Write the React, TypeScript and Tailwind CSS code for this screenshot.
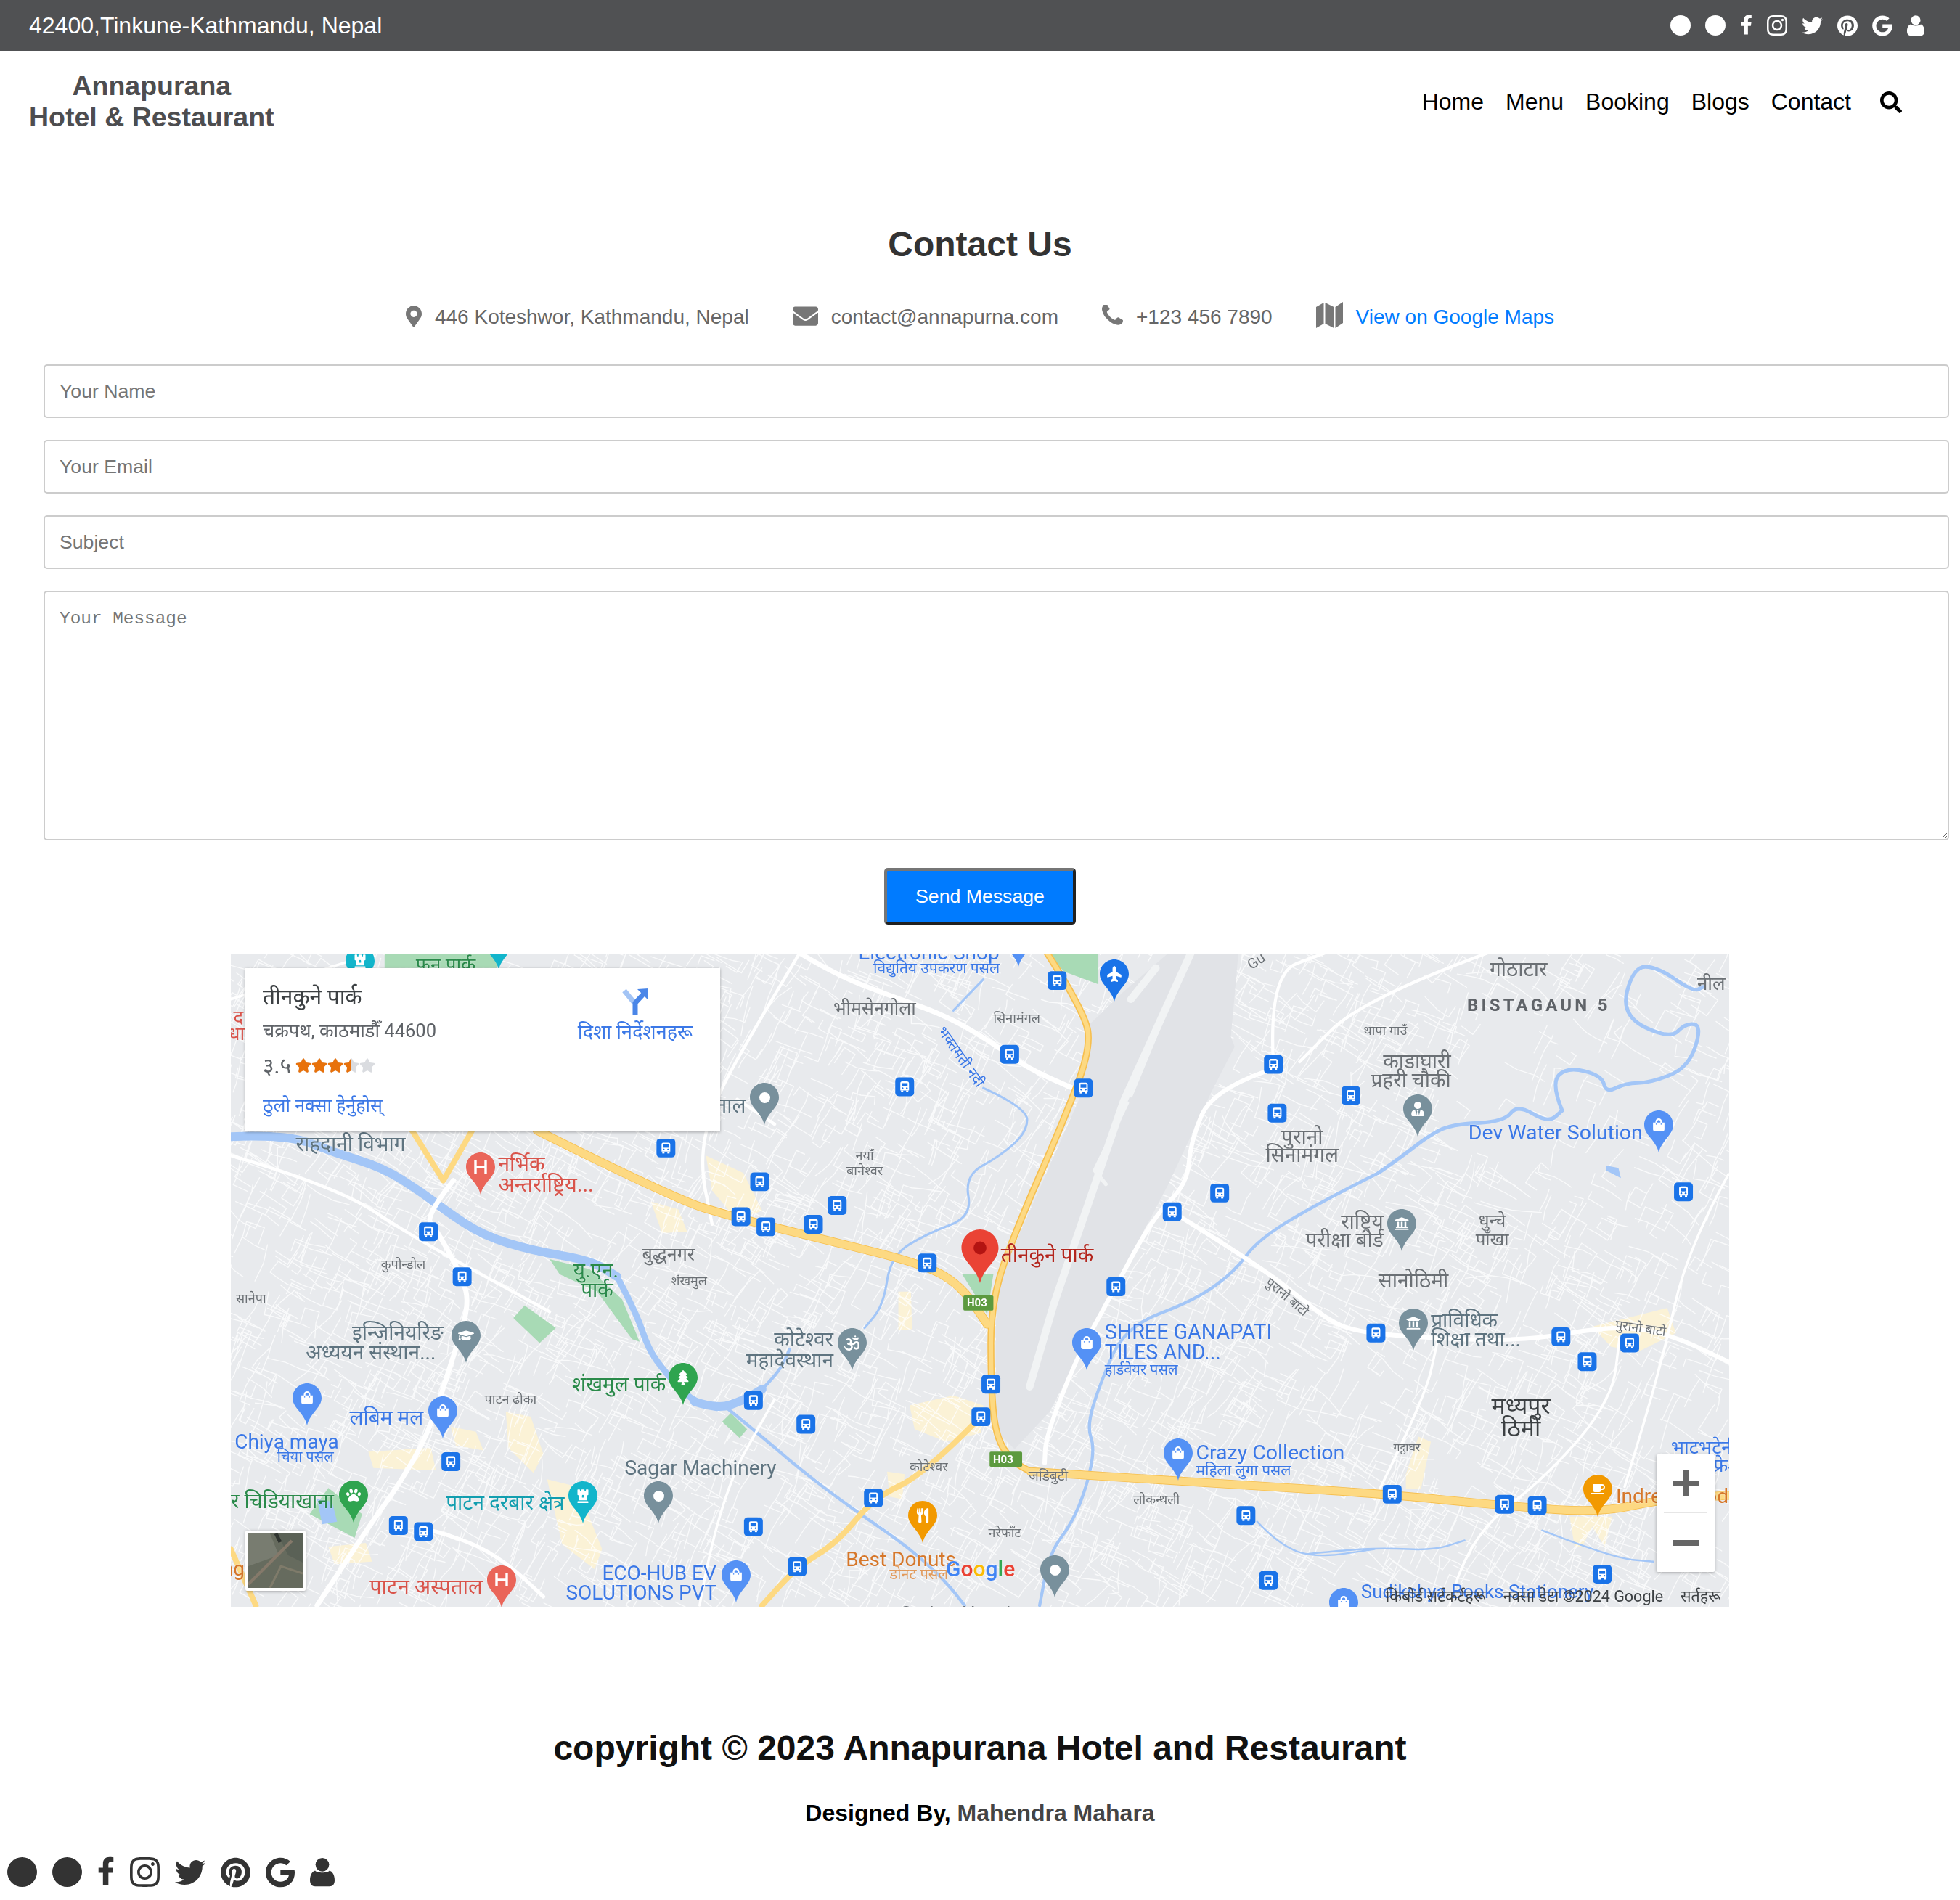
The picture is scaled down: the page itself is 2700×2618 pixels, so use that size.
import { FaFacebookF, FaInstagram, FaTwitter, FaPinterest, FaGoogle, FaSearch, FaMapMarkerAlt, FaEnvelope, FaStar, FaGraduationCap, FaTree, FaPaw, FaChessRook, FaOm, FaUtensils, FaCoffee, FaPlane, FaUniversity, FaShoppingBag, FaUserTie } from "react-icons/fa";
import type { ReactNode } from "react";

const SCALE = 2064 / 1198.6;
const mx = (x: number) => (x - 185) * SCALE;
const my = (y: number) => (y - 763.5) * SCALE + 2;

function UserIcon({ className }: { className: string }) {
  return (
    <svg viewBox="0 0 24 28" className={className} fill="currentColor">
      <circle cx="12" cy="6.8" r="6.6" />
      <path d="M5 12.6C7 15.2 17 15.2 19 12.6C22 13.5 24 17 24 22C24 26 22 28 19 28H5C2 28 0 26 0 22C0 17 2 13.5 5 12.6Z" />
    </svg>
  );
}

function PhoneIcon() {
  return (
    <svg viewBox="192 192 1408 1408" className="w-[29px] h-[29px] -mt-[5px] text-[#777777]" fill="currentColor">
      <path d="M1600 1240q0 27-10 70.5t-21 68.5q-21 50-122 106-94 51-186 51-27 0-53-3.5t-57.5-12.5-47-14.5-55.5-20.5-49-18q-98-35-175-83-127-79-264-216t-216-264q-48-77-83-175-3-9-18-49t-20.5-55.5-14.5-47-12.5-57.5-3.5-53q0-92 51-186 56-101 106-122 25-11 68.5-21t70.5-10q14 0 21 3 18 6 53 76 11 19 30 54t35 63.5 31 53.5q3 4 17.5 25t21.5 35.5 7 28.5q0 20-28.5 50t-62 55-62 53-28.5 46q0 9 5 22.5t8.5 20.5 14 24 11.5 19q76 137 174 235t235 174q2 1 19 11.5t24 14 20.5 8.5 22.5 5q18 0 46-28.5t53-62 55-62 50-28.5q14 0 28.5 7t35.5 21.5 25 17.5q25 15 53.5 31t63.5 35 54 30q70 35 76 53 3 7 3 21z" />
    </svg>
  );
}

function FoldedMapIcon() {
  return (
    <svg viewBox="0 0 37 36" className="w-[37px] h-[36px] -mt-[6px] text-[#777777]" fill="currentColor">
      <path d="M0 7L10.5 1V30L0 36Z" />
      <path d="M12.5 1L24.5 7V36L12.5 30Z" />
      <path d="M26.5 7L37 0V29L26.5 36Z" />
    </svg>
  );
}

function Socials({ big }: { big?: boolean }) {
  const dot = big ? "w-[41px] h-[41px] rounded-full bg-current" : "w-[28px] h-[28px] rounded-full bg-current";
  return (
    <div className={big ? "flex items-center gap-[21px]" : "flex items-center gap-[20px]"}>
      <div className={dot} />
      <div className={dot} />
      <FaFacebookF className={big ? "w-[24px] h-[44px] -mt-[3px]" : "w-[17px] h-[30px] -mt-[3px]"} />
      <FaInstagram className={big ? "w-[41px] h-[47px]" : "w-[28px] h-[32px]"} />
      <FaTwitter className={big ? "w-[42px] h-[42px]" : "w-[29px] h-[29px]"} />
      <FaPinterest className={big ? "w-[41px] h-[42px]" : "w-[28px] h-[29px]"} />
      <FaGoogle className={big ? "w-[40px] h-[42px]" : "w-[28px] h-[29px]"} />
      <UserIcon className={big ? "w-[34px] h-[41px]" : "w-[24px] h-[28px]"} />
    </div>
  );
}

function InfoItem({ icon, children }: { icon: ReactNode; children: ReactNode }) {
  return (
    <div className="flex items-center gap-[18px]">
      {icon}
      <span>{children}</span>
    </div>
  );
}

// street texture, seeded so it stays the same on every load
function buildStreets() {
  let seed = 20240611;
  const rnd = () => {
    seed = (seed * 1664525 + 1013904223) % 4294967296;
    return seed / 4294967296;
  };
  let d = "";
  for (let i = 0; i < 4200; i++) {
    const x = 185 + rnd() * 1198;
    const y = 763 + rnd() * 522;
    if (x > 1170 && x < 1345 && y > 800 && y < 950 && rnd() < 0.75) continue;
    let a = Math.floor(rnd() * 4) * 1.57 + 0.3 + rnd() * 0.35;
    let cx = x;
    let cy = y;
    d += `M${cx.toFixed(1)} ${cy.toFixed(1)}`;
    const n = 2 + Math.floor(rnd() * 3);
    for (let j = 0; j < n; j++) {
      const len = 5 + rnd() * 11;
      cx += Math.cos(a) * len;
      cy += Math.sin(a) * len;
      d += `L${cx.toFixed(1)} ${cy.toFixed(1)}`;
      a += rnd() < 0.35 ? 1.57 : (rnd() - 0.5) * 0.5;
    }
  }
  return d;
}
const streets = buildStreets();

// rounds the corners of "M x y L x y ..." poly lines
function curve(d: string) {
  return d
    .split("M")
    .filter((s) => s.trim())
    .map((sub) => {
      const p = sub.trim().split("L").map((xy) => xy.trim().split(" ").map(Number));
      let out = `M${p[0][0]} ${p[0][1]}`;
      for (let i = 1; i < p.length - 1; i++) {
        const mxp = (p[i][0] + p[i + 1][0]) / 2;
        const myp = (p[i][1] + p[i + 1][1]) / 2;
        out += `Q${p[i][0]} ${p[i][1]} ${mxp} ${myp}`;
      }
      const last = p[p.length - 1];
      return `${out}L${last[0]} ${last[1]}`;
    })
    .join("");
}

const ringNorth = curve("M838 763L868 810L873 840L850 900L815 980L793 1040L793 1110L797 1150L810 1170L825 1178");
const ringWest = curve("M430 905L540 960L590 975L650 990L740 1012L770 1030L790 1060");
const ringEast = curve("M825 1178L900 1183L1100 1195L1200 1205L1280 1211L1330 1200L1383 1197");

const busStops = [
  [846, 785], [808, 844], [724, 870], [867, 871], [1019, 852], [1022, 891], [1081, 877], [533, 919], [608, 946], [593, 974],
  [613, 982], [651, 980], [670, 965], [742, 1011], [893, 1030], [938, 970], [976, 955], [1347, 954], [343, 986], [370, 1022],
  [1101, 1067], [1249, 1070], [1270, 1090], [1304, 1075], [793, 1108], [785, 1134], [603, 1121], [645, 1140], [361, 1170], [699, 1199],
  [319, 1221], [339, 1226], [603, 1222], [638, 1254], [997, 1213], [1015, 1265], [1114, 1196], [1204, 1204], [1230, 1205], [1282, 1260],
];

function MapDrawing() {
  return (
    <svg viewBox="185 763.5 1198.6 522.6" className="absolute inset-0 w-full h-full" fill="none" strokeLinecap="round" strokeLinejoin="round">
      <rect x="185" y="763" width="1200" height="524" fill="#e8eaed" />
      {/* built up areas */}
      <g fill="#fbf2d6">
        <path d="M405 1130l20 4 10 30-8 15-20-20z" />
        <path d="M438 1184l24 6 20 50-6 16-26-20z" />
        <path d="M295 1162l50-3 4 18-50-2z" />
        <path d="M263 1238l30-3 5 15-30 2z" />
        <path d="M361 1142l20 4 6 15-22-4z" />
        <path d="M728 1125l35-8 24 8-2 22-28 7-25-10z" />
        <path d="M719 1034l10 0 1 30-11 1z" />
        <path d="M710 1178l14 2-2 20-10-2z" />
        <path d="M565 925l30 14 15 30-20 8-20-24z" />
        <path d="M521 962l22 6 7 18-20 1z" />
        <path d="M1274 1062l60-15 7 20-30 15-22-4z" />
        <path d="M1256 1214l34 0-6 24-10-16-8 16-6 0z" />
        <path d="M1125 1180l10-30 10 4-8 38-12 0z" />
      </g>
      <path d={streets} stroke="#ffffff" strokeWidth="0.8" opacity="0.75" />
      {/* parks */}
      <g fill="#a8dab5">
        <path d="M308 763h90v12h-90z" />
        <path d="M836 763h43v25l-27-10z" />
        <path d="M411 1055l9-10 25 18-13 12z" />
        <path d="M248 1212l15-21 27 21-6 19z" />
        <path d="M578 1138l7-7 13 13-6 7z" />
        <path d="M770 1020h25l-5 32z" />
        <path d="M440 1008l32 8 26 24 14 34-6-2-28-38-30-14z" />
      </g>
      {/* rivers */}
      <g stroke="#a3c6f7">
        <path strokeWidth="7" d={curve("M185 910L230 908L269 923L307 935L337 954L358 970L387 989L426 1001L473 1009L494 1022")} />
        <path strokeWidth="5" d={curve("M494 1022L509 1050L519 1080L532 1098L553 1121L574 1127")} />
        <path strokeWidth="7" d={curve("M556 1122L574 1128L595 1121L610 1112")} />
        <path strokeWidth="2.5" d={curve("M610 1112L624 1098L632 1080")} />
        <path strokeWidth="2.5" d={curve("M583 1128L610 1150L639 1175L677 1204L728 1239L757 1266L772 1285")} />
        <path strokeWidth="3" d={curve("M1103 939L1123 925L1142 910L1161 900L1204 898L1214 884L1239 899L1250 889")} />
        <path strokeWidth="3" d={curve("M1250 889L1241 867L1254 854L1282 861L1285 875L1301 867L1320 867L1351 855L1362 821L1349 819L1336 832L1297 813L1307 774L1326 774L1355 794L1363 790")} />
        <path strokeWidth="2.5" d={curve("M1103 939L1053 964L1006 993L988 1018L956 1041L900 1062L879 1111L870 1142L876 1159L870 1189L858 1219L840 1243L832 1285")} />
        <path strokeWidth="1.8" d={curve("M787 784L763 809M787 871L822 887L822 906L801 925L772 941L778 974L743 987L713 1005L707 1045L692 1063")} />
        <path strokeWidth="1.4" d={curve("M1045 1244L1074 1241L1107 1239L1147 1241L1172 1233M1234 1225L1290 1247L1323 1250M1006 1218L1024 1237L1053 1247L1100 1240")} />
      </g>
      <path d="M1285 933l10 2 2 8-12-6z" fill="#a3c6f7" />
      <path d="M254 1200l12 2 4 16-12 2z" fill="#a3c6f7" />
      {/* airport */}
      <path d="M935 763L991 763L985 830L988 838L970 873L935 948L884 1045L840 1130L812 1160L797 1145L797 1060L799 1026L864 879L870 822L899 794Z" fill="#e1e3e7" />
      <g stroke="#f1f3f4">
        <path strokeWidth="6" d="M953 763L899 882L843 1045L824 1110" />
        <path strokeWidth="3" d="M929 819L905 877M902 883L876 937L885 948" />
        <path strokeWidth="6" d="M925 775L905 800" />
      </g>
      {/* white roads */}
      <g stroke="#ffffff">
        <path strokeWidth="4" d={curve("M640 763L668 780L712 797L757 813L793 834L822 855L858 871")} />
        <path strokeWidth="3.5" d={curve("M1012 858L970 873L953 913L950 948L923 974L888 1039L861 1088L837 1150L836 1171")} />
        <path strokeWidth="3.5" d={curve("M938 970L1006 1012L1048 1045L1074 1064L1123 1070L1218 1074L1290 1061L1334 1067L1383 1090")} />
        <path strokeWidth="4" d={curve("M363 945L340 974L350 985L370 1022L376 1045L361 1092L343 1148L319 1189L298 1218L254 1285")} />
        <path strokeWidth="3" d={curve("M337 1223L370 1231L405 1250L435 1278")} />
        <path strokeWidth="2.5" d={curve("M185 925L270 950L330 990L440 1050M590 880L620 900M640 763L600 830L570 885L560 930L570 980M1019 852L1015 780L1060 763M1190 763L1090 800L1040 850")} />
        <path strokeWidth="2" d={curve("M1160 1285L1172 1233L1240 1180L1290 1120L1296 1070M1100 1200L1140 1120L1150 1075M560 1285L575 1200L620 1120M185 800L300 763M1383 940L1350 1000L1330 1090L1300 1190")} />
      </g>
      {/* highways */}
      <g stroke="#f6bf4f">
        <path strokeWidth="5.5" d={ringNorth} />
        <path strokeWidth="7" d={ringWest} />
        <path strokeWidth="7" d={ringEast} />
      </g>
      <g stroke="#fdd982">
        <path strokeWidth="3.6" d={ringNorth} />
        <path strokeWidth="6" d={ringWest} />
        <path strokeWidth="6" d={ringEast} />
        <path strokeWidth="4.5" d={curve("M785 1134L740 1180L699 1199L670 1235L638 1254L610 1285")} />
        <path strokeWidth="4.5" d="M330 905L355 945L378 905M185 1240L205 1285" />
      </g>
      {/* bus stops */}
      {busStops.map(([x, y]) => (
        <g key={`${x}-${y}`} transform={`translate(${x - 7.5} ${y - 7.5}) scale(0.58)`}>
          <rect width="26" height="26" rx="5" fill="#1a73e8" />
          <path d="M7 8a2.5 2.5 0 012.5-2.5h7A2.5 2.5 0 0119 8v10H7z" fill="#ffffff" />
          <rect x="9" y="8" width="8" height="4.5" fill="#1a73e8" />
          <circle cx="10" cy="15" r="1.2" fill="#1a73e8" />
          <circle cx="16" cy="15" r="1.2" fill="#1a73e8" />
          <rect x="8" y="18" width="3" height="2.5" fill="#ffffff" />
          <rect x="15" y="18" width="3" height="2.5" fill="#ffffff" />
        </g>
      ))}
      <rect x="771" y="1037" width="24" height="12" rx="1" fill="#5c9a3f" />
      <rect x="792" y="1162" width="26" height="12" rx="1" fill="#5c9a3f" />
    </svg>
  );
}

type Tone = "grey" | "slate" | "dark" | "red" | "wine" | "green" | "teal" | "blue" | "orange" | "tan";
const toneClass: Record<Tone, string> = {
  grey: "text-[#6b7075]",
  slate: "text-[#5f7480]",
  dark: "text-[#3c4043]",
  red: "text-[#d9534a]",
  wine: "text-[#b3261e]",
  green: "text-[#2a8a4a]",
  teal: "text-[#129eaf]",
  blue: "text-[#3b78e7]",
  orange: "text-[#d6772a]",
  tan: "text-[#e19a5c]",
};

// text, x, y (centre), px size, tone, anchor (l/c/r), rotation
type Label = [string, number, number, number, Tone, ("l" | "c" | "r")?, number?];
const labels: Label[] = [
  ["फन पार्क", 333, 771, 26, "green"],
  ["Electronic Shop", 687, 762, 28, "blue"],
  ["विद्युतिय उपकरण पसल", 699, 774, 21, "blue"],
  ["Gu", 998, 768, 20, "grey", "l", -35],
  ["द", 187, 813, 26, "red"],
  ["धा", 183, 826, 26, "red"],
  ["अस्पताल", 597, 884, 28, "slate", "r"],
  ["राहदानी विभाग", 237, 915, 28, "slate"],
  ["नर्भिक", 399, 931, 28, "red"],
  ["अन्तर्राष्ट्रिय...", 399, 947, 29, "red"],
  ["भीमसेनगोला", 667, 806, 25, "grey"],
  ["सिनामंगल", 795, 814, 18, "grey"],
  ["भक्तमती नदी", 769, 845, 20, "blue", "c", 55],
  ["नयाँ", 692, 924, 18, "grey", "c"],
  ["बानेश्वर", 692, 936, 18, "grey", "c"],
  ["बुद्धनगर", 514, 1003, 25, "grey"],
  ["शंखमुल", 537, 1024, 18, "grey"],
  ["कुपोन्डोल", 305, 1011, 18, "grey"],
  ["सानेपा", 189, 1038, 18, "grey"],
  ["यु.एन.", 477, 1016, 28, "green", "c"],
  ["पार्क", 478, 1032, 28, "green", "c"],
  ["इन्जिनियरिङ", 282, 1066, 28, "slate"],
  ["अध्ययन संस्थान...", 245, 1082, 28, "slate"],
  ["कोटेश्वर", 667, 1071, 28, "slate", "r"],
  ["महादेवस्थान", 667, 1088, 28, "slate", "r"],
  ["शंखमुल पार्क", 458, 1107, 28, "green"],
  ["पाटन ढोका", 388, 1119, 18, "grey"],
  ["लबिम मल", 280, 1134, 28, "blue"],
  ["Chiya maya", 188, 1153, 28, "blue"],
  ["चिया पसल", 222, 1165, 20, "blue"],
  ["र चिडियाखाना", 185, 1201, 28, "green"],
  ["पाटन दरबार क्षेत्र", 357, 1202, 28, "teal"],
  ["Sagar Machinery", 500, 1174, 28, "slate"],
  ["ECO-HUB EV", 482, 1258, 28, "blue"],
  ["SOLUTIONS PVT", 453, 1274, 28, "blue"],
  ["पाटन अस्पताल", 296, 1269, 29, "red"],
  ["ng", 196, 1255, 28, "orange", "r"],
  ["Best Donuts", 677, 1247, 28, "orange"],
  ["डोनट पसल", 712, 1259, 20, "tan"],
  ["Godart Nepal", 720, 1290, 26, "grey"],
  ["नरेफाँट", 791, 1226, 18, "grey"],
  ["कोटेश्वर", 728, 1173, 18, "grey"],
  ["जडिबुटी", 823, 1180, 19, "grey"],
  ["लोकन्थली", 907, 1199, 18, "grey"],
  ["गट्ठाघर", 1115, 1158, 16, "grey"],
  ["SHREE GANAPATI", 884, 1065, 28.7, "blue"],
  ["TILES AND...", 884, 1081, 28.7, "blue"],
  ["हार्डवेयर पसल", 884, 1095, 20, "blue"],
  ["Crazy Collection", 957, 1162, 28.5, "blue"],
  ["महिला लुगा पसल", 957, 1176, 21, "blue"],
  ["Dev Water Solution", 1175, 906, 28.5, "blue"],
  ["गोठाटार", 1192, 775, 28, "grey"],
  ["थापा गाउँ", 1091, 824, 18, "grey"],
  ["काडाघारी", 1161, 849, 28, "grey", "r"],
  ["प्रहरी चौकी", 1161, 864, 28, "grey", "r"],
  ["पुरानो", 1042, 909, 28, "grey", "c"],
  ["सिनामंगल", 1042, 924, 28, "grey", "c"],
  ["राष्ट्रिय", 1107, 977, 28, "grey", "r"],
  ["परीक्षा बोर्ड", 1107, 992, 28, "grey", "r"],
  ["धुन्चे", 1194, 976, 24, "grey", "c"],
  ["पाँखा", 1194, 991, 24, "grey", "c"],
  ["सानोठिमी", 1103, 1024, 28, "grey"],
  ["प्राविधिक", 1145, 1056, 28, "slate"],
  ["शिक्षा तथा...", 1145, 1071, 28, "slate"],
  ["पुरानो बाटो", 1313, 1062, 18, "grey", "c", 8],
  ["पुरानो बाटो", 1030, 1037, 18, "grey", "c", 40],
  ["मध्यपुर", 1217, 1124, 32, "dark", "c"],
  ["ठिमी", 1217, 1142, 32, "dark", "c"],
  ["भाटभटेनी", 1337, 1157, 26, "blue"],
  ["फ्रेश", 1371, 1172, 26, "blue"],
  ["Indreni Food", 1293, 1197, 28, "orange"],
  ["नील", 1358, 786, 26, "grey"],
  ["Sudikshya Books Stationery", 1089, 1273, 26, "blue"],
  ["तीनकुने पार्क", 801, 1004, 28, "wine"],
];

function MapLabel({ item }: { item: Label }) {
  const [text, x, y, size, tone, anchor = "l", rot = 0] = item;
  const shift = anchor === "l" ? "0%" : anchor === "c" ? "-50%" : "-100%";
  return (
    <span
      className={`absolute whitespace-nowrap leading-none [text-shadow:0_0_2px_#f1f3f4] ${toneClass[tone]}`}
      style={{ left: mx(x), top: my(y), fontSize: size, transform: `translate(${shift},-50%) rotate(${rot}deg)` }}
    >
      {text}
    </span>
  );
}

type PinItem = [number, number, string, ReactNode];
const grey = "#78909c";
const blue = "#5491f5";
const bag = <FaShoppingBag size={18} />;
const dot = <span className="block w-[15px] h-[15px] rounded-full bg-white" />;
const hosp = (
  <svg width="20" height="20" viewBox="0 0 20 20" stroke="#fff" strokeWidth="3.4" fill="none">
    <path d="M3 1v18M17 1v18M3 10h14" />
  </svg>
);
// centre x, top y in page pixels of the map
const pins: PinItem[] = [
  [735, 178, grey, dot],
  [343.5, 274, "#ea6559", hosp],
  [324, 506, grey, <FaGraduationCap size={22} />],
  [105, 592, blue, bag],
  [291.5, 610, blue, bag],
  [623, 564, "#2fa44f", <FaTree size={20} />],
  [169, 726, "#2fa44f", <FaPaw size={20} />],
  [485, 727, "#12b5cb", <FaChessRook size={20} />],
  [589, 727, grey, dot],
  [695.6, 836, blue, bag],
  [373, 843, "#ea6559", hosp],
  [855.5, 516, grey, <FaOm size={21} />],
  [1179, 516, blue, bag],
  [1304.5, 668, blue, bag],
  [953, 754, "#f29900", <FaUtensils size={20} />],
  [1135, 829, grey, dot],
  [1533, 874, blue, bag],
  [1629, 489, grey, <FaUniversity size={20} />],
  [1883, 718, "#f29900", <FaCoffee size={20} />],
  [1635, 194, grey, <FaUserTie size={20} />],
  [1967, 216, blue, bag],
  [1613, 352, grey, <FaUniversity size={20} />],
  [178, -10, "#12b5cb", <FaChessRook size={20} />],
  [369, -36, "#12b5cb", dot],
  [1085, -40, blue, bag],
  [1217, 8, "#1a73e8", <FaPlane size={22} className="-rotate-90" />],
];

function Pin({ item }: { item: PinItem }) {
  const [x, y, color, glyph] = item;
  return (
    <div className="absolute w-[40px] h-[58px]" style={{ left: x - 20, top: y }}>
      <svg viewBox="0 0 40 58" className="w-full h-full">
        <path fill={color} d="M20 0C9 0 0 9 0 20c0 6 3 11 7 16 5 6 11 13 13 22 2-9 8-16 13-22 4-5 7-10 7-16C40 9 31 0 20 0z" />
      </svg>
      <div className="absolute left-0 top-0 w-[40px] h-[40px] flex items-center justify-center text-white">{glyph}</div>
    </div>
  );
}

function InfoCard() {
  return (
    <div className="absolute left-[20px] top-[20px] w-[654px] h-[225px] bg-white shadow-[0_1px_4px_rgba(0,0,0,0.3)] pl-[24px] pr-[38px] pt-[18px] flex justify-between">
      <div className="flex flex-col">
        <div className="text-[30px] leading-[44px] text-[#3c4043]">तीनकुने पार्क</div>
        <div className="text-[25.5px] leading-[36px] mt-[6px] text-[#5f6368]">चक्रपथ, काठमाडौँ 44600</div>
        <div className="flex items-center gap-[6px] mt-[14px] h-[32px] text-[30px] text-[#5f6368]">
          <span>३.५</span>
          <div className="relative flex text-[#dadce0]">
            <FaStar size={22} />
            <FaStar size={22} />
            <FaStar size={22} />
            <FaStar size={22} />
            <FaStar size={22} />
            <div className="absolute left-0 top-0 w-[77px] overflow-hidden flex text-[#e8710a]">
              <FaStar size={22} className="shrink-0" />
              <FaStar size={22} className="shrink-0" />
              <FaStar size={22} className="shrink-0" />
              <FaStar size={22} className="shrink-0" />
            </div>
          </div>
        </div>
        <div className="text-[25px] leading-[40px] mt-[20px] text-[#3b78e7]">ठुलो नक्सा हेर्नुहोस्</div>
      </div>
      <div className="flex flex-col items-center pt-[10px]">
        <svg width="36" height="36" viewBox="0 0 36 36" fill="none">
          <path d="M3 3L17 20" stroke="#a3c4f5" strokeWidth="7" />
          <path d="M18 36V20L30 7" stroke="#4a86e8" strokeWidth="7" />
          <path d="M21 1L36 0L35 15Z" fill="#4a86e8" />
        </svg>
        <div className="text-[27px] leading-[40px] mt-[4px] text-[#3b78e7]">दिशा निर्देशनहरू</div>
      </div>
    </div>
  );
}

function GoogleMap() {
  return (
    <div className="relative w-[2064px] h-[900px] mx-auto overflow-hidden bg-[#e8eaed] font-['Roboto','Noto_Sans','Noto_Sans_Devanagari',sans-serif]">
      <div className="absolute inset-0 blur-[0.6px]">
        <MapDrawing />
        {labels.map((l, i) => (
          <MapLabel key={i} item={l} />
        ))}
        <span className="absolute left-[1703px] top-[59px] text-[24px] leading-none font-bold tracking-[4.2px] text-[#5f6368]">BISTAGAUN 5</span>
        {pins.map((p, i) => (
          <Pin key={i} item={p} />
        ))}
        {/* main marker */}
        <div className="absolute left-[1006px] top-[380px] w-[52px] h-[74px]">
          <svg viewBox="0 0 40 58" className="w-full h-full">
            <path fill="#ea4335" d="M20 0C9 0 0 9 0 20c0 6 3 11 7 16 5 6 11 13 13 22 2-9 8-16 13-22 4-5 7-10 7-16C40 9 31 0 20 0z" />
            <circle cx="20" cy="20" r="7" fill="#b31412" />
          </svg>
        </div>
        <span className="absolute left-[1014px] top-[474px] text-[15px] leading-none font-bold text-white">H03</span>
        <span className="absolute left-[1050px] top-[690px] text-[15px] leading-none font-bold text-white">H03</span>
        <InfoCard />
        <div className="absolute left-[20px] top-[795px] w-[83px] h-[83px] border-[4px] border-white rounded-[2px] shadow-[0_1px_4px_rgba(0,0,0,0.3)] bg-[#666b5e] overflow-hidden">
          <svg viewBox="0 0 75 75" className="w-full h-full">
            <path d="M0 0H30L42 30L0 45Z" fill="#787c70" />
            <path d="M40 0H75V40L55 30Z" fill="#5a6156" />
            <path d="M0 70L30 40L60 10" stroke="#85796a" strokeWidth="4" fill="none" />
            <path d="M30 75L45 45L75 55" stroke="#7f7b6a" strokeWidth="3" fill="none" />
            <path d="M38 0L44 12" stroke="#2f3430" strokeWidth="5" />
          </svg>
        </div>
        <div className="absolute left-[985px] top-[833px] text-[30px] leading-none font-medium [text-shadow:0_0_2px_#fff]">
          <span className="text-[#4285f4]">G</span>
          <span className="text-[#ea4335]">o</span>
          <span className="text-[#fbbc05]">o</span>
          <span className="text-[#4285f4]">g</span>
          <span className="text-[#34a853]">l</span>
          <span className="text-[#ea4335]">e</span>
        </div>
        <div className="absolute left-[1964px] top-[690px] w-[80px] h-[162px] bg-white rounded-[2px] shadow-[0_1px_4px_rgba(0,0,0,0.3)] flex flex-col items-center">
          <div className="h-[80px] flex items-center justify-center">
            <svg width="36" height="36" viewBox="0 0 36 36" fill="#666666">
              <path d="M14 0h8v14h14v8H22v14h-8V22H0v-8h14z" />
            </svg>
          </div>
          <div className="w-[60px] h-[1px] bg-[#e6e6e6]" />
          <div className="flex-1 flex items-center justify-center">
            <div className="w-[36px] h-[8px] bg-[#666666]" />
          </div>
        </div>
        <div className="absolute right-0 bottom-0 h-[28px] pr-[12px] flex items-center gap-[24px] text-[21.5px] leading-none text-[#3c4043]">
          <span>किबोर्ड सर्टकर्टहरू</span>
          <span>नक्सा डेटा ©2024 Google</span>
          <span>सर्तहरू</span>
        </div>
      </div>
    </div>
  );
}

function FormField({ placeholder }: { placeholder: string }) {
  return (
    <input
      placeholder={placeholder}
      className="block w-full h-[74px] px-[20px] bg-white border-2 border-[#cccccc] rounded-[5px] text-[26.67px] placeholder:text-[#757575] outline-none"
    />
  );
}

export default function App() {
  return (
    <div className="w-full bg-white font-['Liberation_Sans',Arial,sans-serif]">
      <div className="h-[70px] bg-[#505153] text-white flex items-center justify-between pl-[40px] pr-[49px]">
        <span className="text-[32px] leading-none">42400,Tinkune-Kathmandu, Nepal</span>
        <Socials />
      </div>

      <header className="h-[140px] flex items-center justify-between pl-[40px] pr-[80px]">
        <div className="text-[37.5px] leading-[43px] font-bold text-[#4d4d4f] text-center">
          Annapurana
          <br />
          Hotel &amp; Restaurant
        </div>
        <nav className="flex items-center text-[32px] text-black">
          <div className="flex gap-[30px]">
            <a>Home</a>
            <a>Menu</a>
            <a>Booking</a>
            <a>Blogs</a>
            <a>Contact</a>
          </div>
          <FaSearch size={30} className="ml-[40px] mt-[2px]" />
        </nav>
      </header>

      <main>
        <h2 className="mt-[98px] text-center text-[48px] leading-[58px] font-bold text-[#333333]">Contact Us</h2>
        <div className="mt-[51px] h-[40px] flex items-center justify-center gap-[60px] text-[28px] text-[#666666]">
          <InfoItem icon={<FaMapMarkerAlt size={30} className="text-[#777777] w-[22px] -mt-[3px]" />}>446 Koteshwor, Kathmandu, Nepal</InfoItem>
          <InfoItem icon={<FaEnvelope size={35} className="text-[#777777] -mt-[3px]" />}>contact@annapurna.com</InfoItem>
          <InfoItem icon={<PhoneIcon />}>+123 456 7890</InfoItem>
          <InfoItem icon={<FoldedMapIcon />}>
            <a className="text-[#007bff]">View on Google Maps</a>
          </InfoItem>
        </div>

        <form className="mt-[45px] pl-[60px] pr-[15px] flex flex-col gap-[30px]">
          <FormField placeholder="Your Name" />
          <FormField placeholder="Your Email" />
          <FormField placeholder="Subject" />
          <textarea
            placeholder="Your Message"
            className="block w-full h-[344px] px-[20px] pt-[22px] pb-[18px] bg-white border-2 border-[#cccccc] rounded-[5px] font-['Liberation_Mono',monospace] text-[24.4px] leading-[30px] placeholder:text-[#757575] outline-none"
          />
        </form>

        <div className="mt-[38px] flex justify-center">
          <button className="w-[264px] h-[78px] bg-[#007bff] text-white text-[26.67px] rounded-[5px] border-[4px] border-t-[#767676] border-l-[#767676] border-r-[#212121] border-b-[#212121]">
            Send Message
          </button>
        </div>

        <div className="mt-[40px]">
          <GoogleMap />
        </div>
      </main>

      <footer className="text-center">
        <h3 className="mt-[166px] text-[48px] leading-[58px] font-bold text-[#111111]">copyright © 2023 Annapurana Hotel and Restaurant</h3>
        <p className="mt-[40px] text-[32px] leading-[40px] font-bold text-black">
          Designed By, <span className="text-[#444444]">Mahendra Mahara</span>
        </p>
        <div className="mt-[38px] pb-[16px] pl-[10px] text-[#333333]">
          <Socials big />
        </div>
      </footer>
    </div>
  );
}
